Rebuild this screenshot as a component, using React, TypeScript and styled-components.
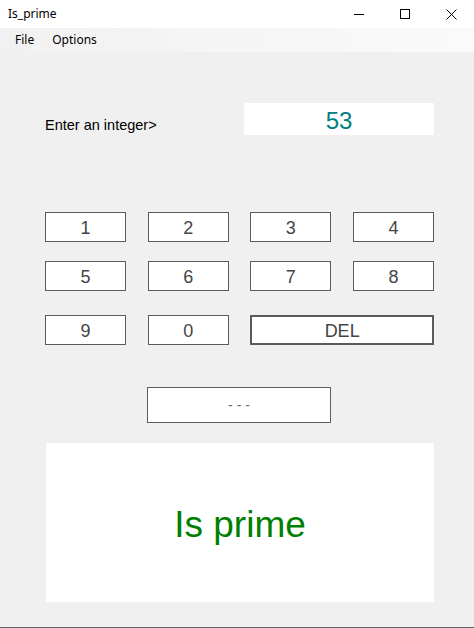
import React, { useState } from 'react';
import styled, { createGlobalStyle } from 'styled-components';

const GlobalStyle = createGlobalStyle`
  html, body {
    margin: 0;
    padding: 0;
    background: #f0f0f0;
  }
`;

const Window = styled.div`
  width: 474px;
  height: 628px;
  box-sizing: border-box;
  display: flex;
  flex-direction: column;
  background: #f0f0f0;
  border-bottom: 1px solid #646464;
  overflow: hidden;
`;

const TitleBar = styled.div`
  height: 28px;
  flex: none;
  display: flex;
  align-items: center;
  background: #ffffff;
  font-family: 'Segoe UI', 'Noto Sans', sans-serif;
  font-size: 12px;
  color: #000;
`;

const Title = styled.span`
  flex: 1;
  padding-left: 8px;
  margin-top: -2px;
`;

const WinButton = styled.div`
  width: 46px;
  height: 28px;
  display: flex;
  align-items: center;
  justify-content: center;
`;

const MenuBar = styled.div`
  height: 24px;
  flex: none;
  display: flex;
  align-items: center;
  padding-left: 6px;
  background: linear-gradient(to right, #f1f1f1, #fafafa);
  font-family: 'Segoe UI', 'Noto Sans', sans-serif;
  font-size: 12px;
  color: #000;
`;

const MenuItem = styled.span`
  padding: 0 9px;
  margin-top: -1px;
`;

const Content = styled.div`
  flex: 1;
  display: flex;
  flex-direction: column;
  padding: 0 40px 0 45px;
  font-family: 'Liberation Sans', Arial, sans-serif;
`;

const InputRow = styled.div`
  margin-top: 51px;
  height: 32px;
  display: flex;
  align-items: center;
  justify-content: space-between;
`;

const Label = styled.span`
  font-size: 14.5px;
  color: #000;
  margin-top: 12px;
`;

const NumberField = styled.div`
  width: 190px;
  height: 32px;
  box-sizing: border-box;
  padding-top: 3px;
  background: #fff;
  display: flex;
  align-items: center;
  justify-content: center;
  font-size: 24px;
  color: #008080;
`;

const Keypad = styled.div`
  margin-top: 77px;
  display: grid;
  grid-template-columns: repeat(4, 81px);
  grid-template-rows: 30px 30px 35px;
  justify-content: space-between;
  row-gap: 19px;
`;

const Key = styled.button<{ $wide?: boolean; $lower?: boolean }>`
  grid-column: ${({ $wide }) => ($wide ? 'span 2' : 'auto')};
  align-self: ${({ $lower }) => ($lower ? 'end' : 'start')};
  box-sizing: border-box;
  height: 30px;
  padding: 3px 0 0;
  background: #fff;
  border: ${({ $wide }) => ($wide ? '2px' : '1px')} solid #5a5a5a;
  border-radius: 0;
  font-family: 'Liberation Sans', Arial, sans-serif;
  font-size: 18px;
  color: #454545;
  display: flex;
  align-items: center;
  justify-content: center;
  cursor: pointer;
`;

const CheckButton = styled.button`
  margin: 42px 0 0 102px;
  width: 184px;
  height: 36px;
  box-sizing: border-box;
  padding: 0;
  background: #fff;
  border: 1px solid #5e5e5e;
  border-radius: 0;
  font-family: 'Liberation Sans', Arial, sans-serif;
  font-size: 14px;
  color: #6a6a6a;
  cursor: pointer;
`;

const Result = styled.div<{ $prime: boolean }>`
  margin: 20px 0 0 1px;
  width: 388px;
  height: 159px;
  box-sizing: border-box;
  padding-top: 4px;
  background: #fff;
  display: flex;
  align-items: center;
  justify-content: center;
  font-size: 37px;
  color: ${({ $prime }) => ($prime ? '#008000' : '#c00000')};
`;

const isPrime = (n: number) => {
  if (n < 2) return false;
  for (let i = 2; i * i <= n; i++) if (n % i === 0) return false;
  return true;
};

const App: React.FC = () => {
  const [value, setValue] = useState<string>('53');

  const press = (d: string) => setValue((v) => (v + d).slice(0, 9));
  const del = () => setValue((v) => v.slice(0, -1));

  const keys = ['1', '2', '3', '4', '5', '6', '7', '8'];
  const prime = isPrime(Number(value));

  return (
    <>
      <GlobalStyle />
      <Window>
        <TitleBar>
          <Title>Is_prime</Title>
          <WinButton>
            <svg width="10" height="10" viewBox="0 0 10 10">
              <path d="M0 5.5h10" stroke="#000" strokeWidth="1" />
            </svg>
          </WinButton>
          <WinButton>
            <svg width="10" height="10" viewBox="0 0 10 10">
              <rect x="0.5" y="0.5" width="9" height="9" fill="none" stroke="#000" strokeWidth="1" />
            </svg>
          </WinButton>
          <WinButton>
            <svg width="11" height="11" viewBox="0 0 11 11">
              <path d="M0.5 0.5l10 10M10.5 0.5l-10 10" stroke="#000" strokeWidth="1" />
            </svg>
          </WinButton>
        </TitleBar>
        <MenuBar>
          <MenuItem>File</MenuItem>
          <MenuItem>Options</MenuItem>
        </MenuBar>
        <Content>
          <InputRow>
            <Label>Enter an integer&gt;</Label>
            <NumberField>{value}</NumberField>
          </InputRow>
          <Keypad>
            {keys.map((k) => (
              <Key key={k} onClick={() => press(k)}>
                {k}
              </Key>
            ))}
            <Key $lower onClick={() => press('9')}>9</Key>
            <Key $lower onClick={() => press('0')}>0</Key>
            <Key $lower $wide onClick={del}>DEL</Key>
          </Keypad>
          <CheckButton>- - -</CheckButton>
          <Result $prime={prime}>{prime ? 'Is prime' : 'Not prime'}</Result>
        </Content>
      </Window>
    </>
  );
};

export default App;
